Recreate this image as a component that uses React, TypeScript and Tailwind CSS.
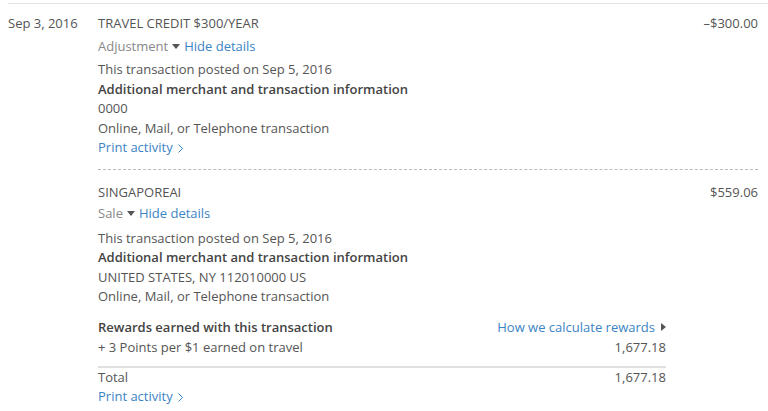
const font = { fontFamily: '"Open Sans", "Noto Sans", Arial, sans-serif' };

function Caret() {
  return <span className="inline-block align-middle mx-[4px] mb-[2px] w-0 h-0 border-l-[4px] border-r-[4px] border-t-[5px] border-l-transparent border-r-transparent border-t-[#555]" />;
}

function PrintLink() {
  return (
    <a className="text-[#3b84c4] leading-[19.5px] flex items-center gap-[5px]">
      Print activity
      <svg width="5" height="9" viewBox="0 0 5 9" className="mt-[1px]">
        <path d="M0.5 0.5 L4.5 4.5 L0.5 8.5" fill="none" stroke="#3b84c4" strokeWidth="1" />
      </svg>
    </a>
  );
}

export default function App() {
  return (
    <div style={font} className="bg-white w-[768px] h-[411px] text-[13px] text-[#555] pt-[3px]">
      <div className="ml-2 border-t border-[#e2e2e2] flex pr-[10px]">
        <div className="w-[90px] pt-[10px] leading-[19.5px]">Sep 3, 2016</div>
        <div className="flex-1">
          {/* Transaction 1 */}
          <div className="flex pt-[10px]">
            <div className="flex-1">
              <div className="leading-[19.5px]">TRAVEL CREDIT $300/YEAR</div>
              <div className="leading-[19.5px] mt-[3px] text-[#888]">
                Adjustment<Caret />
                <a className="text-[#3b84c4]">Hide details</a>
              </div>
              <div className="mt-[4px] leading-[19.5px]">
                <div>This transaction posted on Sep 5, 2016</div>
                <div className="font-semibold text-[#444]">Additional merchant and transaction information</div>
                <div>0000</div>
                <div>Online, Mail, or Telephone transaction</div>
              </div>
              <PrintLink />
            </div>
            <div className="leading-[19.5px]">–$300.00</div>
          </div>

          <div className="mt-[11px] border-t border-dashed border-[#bbb]" />

          {/* Transaction 2 */}
          <div className="flex pt-[13px]">
            <div className="flex-1">
              <div className="leading-[19.5px]">SINGAPOREAI</div>
              <div className="leading-[19.5px] mt-[2px] text-[#888]">
                Sale<Caret />
                <a className="text-[#3b84c4]">Hide details</a>
              </div>
              <div className="mt-[5px] leading-[19.5px]">
                <div>This transaction posted on Sep 5, 2016</div>
                <div className="font-semibold text-[#444]">Additional merchant and transaction information</div>
                <div>UNITED STATES, NY 112010000 US</div>
                <div>Online, Mail, or Telephone transaction</div>
              </div>

              <div className="w-[568px] mt-[11px] leading-[19.5px]">
                <div className="flex justify-between">
                  <span className="font-semibold text-[#444]">Rewards earned with this transaction</span>
                  <a className="text-[#3b84c4]">
                    How we calculate rewards
                    <span className="inline-block align-middle ml-[6px] mb-[2px] w-0 h-0 border-t-[4px] border-b-[4px] border-l-[5px] border-t-transparent border-b-transparent border-l-[#555]" />
                  </a>
                </div>
                <div className="flex justify-between mt-[1px]">
                  <span>+ 3 Points per $1 earned on travel</span>
                  <span>1,677.18</span>
                </div>
                <div className="border-t-2 border-[#e0e0e0] mt-[8px] flex justify-between">
                  <span>Total</span>
                  <span>1,677.18</span>
                </div>
              </div>
              <PrintLink />
            </div>
            <div className="leading-[19.5px]">$559.06</div>
          </div>
        </div>
      </div>
    </div>
  );
}
